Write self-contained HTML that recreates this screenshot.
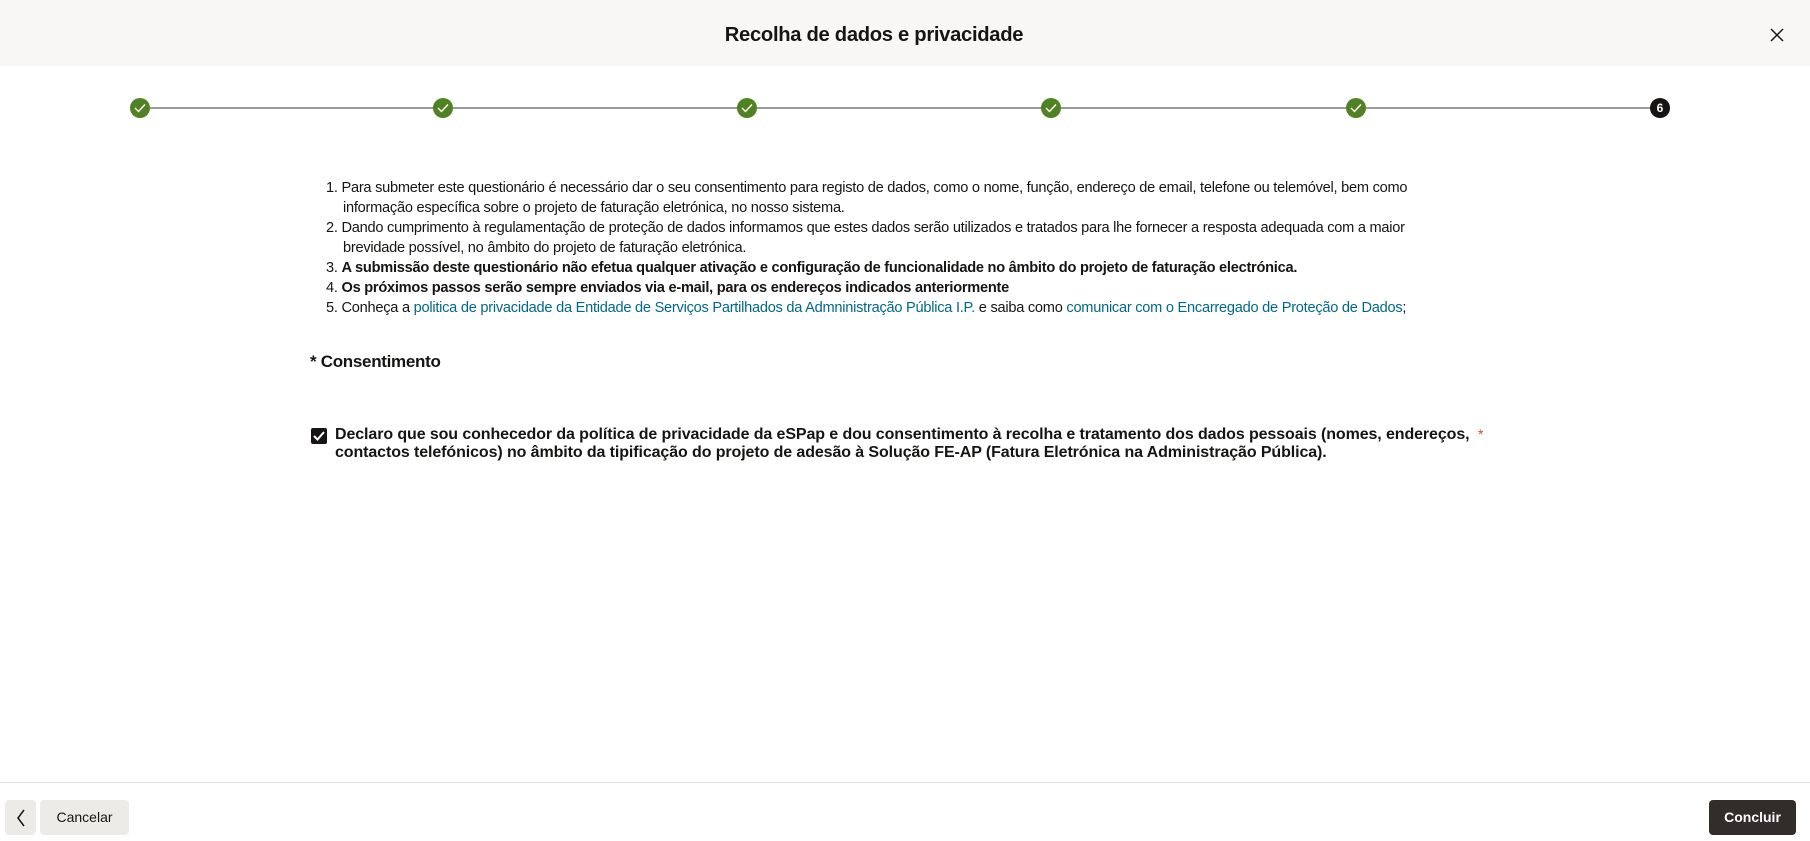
<!DOCTYPE html>
<html><head><meta charset="utf-8">
<style>
*{box-sizing:border-box;margin:0;padding:0}
body{width:1810px;height:841px;background:#fff;font-family:"Liberation Sans",sans-serif;color:#161513;position:relative;overflow:hidden}
.hdr{position:absolute;left:0;top:0;width:1810px;height:66px;background:#f8f7f5}
.hdr h1{position:absolute;left:0;right:62px;top:24px;text-align:center;font-size:20.2px;font-weight:bold;letter-spacing:-0.3px}
.x{position:absolute;left:1770px;top:28px}
.line{position:absolute;left:140px;width:1520px;top:107px;height:2px;background:#9a9a9a}
.c{position:absolute;top:98px;width:20px;height:20px;border-radius:50%;background:#508223;margin-left:-10px}
.c svg{position:absolute;left:4px;top:5px}
.c6{background:#161513;color:#fff;font-size:12px;font-weight:bold;text-align:center;line-height:20px}
.list{position:absolute;left:326px;top:178px;font-size:14.6px;line-height:20px;white-space:nowrap;letter-spacing:-0.25px}
.list div{padding-left:17px;text-indent:-17px}
.list b{font-weight:bold}
a{color:#00688c;text-decoration:none}
.cons{position:absolute;left:310px;top:352px;font-size:17px;font-weight:bold;letter-spacing:-0.3px}
.cb{position:absolute;left:311px;top:428px;width:16px;height:16px;background:#161513;border-radius:2px}
.cb svg{position:absolute;left:2px;top:3px}
.lbl{position:absolute;left:335px;top:426px;font-size:16px;font-weight:bold;line-height:18px;white-space:nowrap;letter-spacing:-0.1px}
.req{position:absolute;left:1478px;top:426px;color:#c74634;font-size:14px}
.ft{position:absolute;left:0;top:782px;width:1810px;height:1px;background:#e4e2df}
.btn{position:absolute;top:800px;height:35px;background:#edebe8;border-radius:4px;font-size:14px;line-height:35px;text-align:center}
</style></head><body>
<div class="hdr"><h1>Recolha de dados e privacidade</h1>
<svg class="x" width="14" height="14" viewBox="0 0 14 14"><path d="M1 1L13 13M13 1L1 13" stroke="#161513" stroke-width="1.5"/></svg></div>
<div class="line"></div>
<div class="c" style="left:140px"><svg width="12" height="10" viewBox="0 0 12 10"><path d="M1 5l3.5 3.5L11 1.5" stroke="#fff" stroke-width="1.4" fill="none"/></svg></div>
<div class="c" style="left:443px"><svg width="12" height="10" viewBox="0 0 12 10"><path d="M1 5l3.5 3.5L11 1.5" stroke="#fff" stroke-width="1.4" fill="none"/></svg></div>
<div class="c" style="left:747px"><svg width="12" height="10" viewBox="0 0 12 10"><path d="M1 5l3.5 3.5L11 1.5" stroke="#fff" stroke-width="1.4" fill="none"/></svg></div>
<div class="c" style="left:1051px"><svg width="12" height="10" viewBox="0 0 12 10"><path d="M1 5l3.5 3.5L11 1.5" stroke="#fff" stroke-width="1.4" fill="none"/></svg></div>
<div class="c" style="left:1356px"><svg width="12" height="10" viewBox="0 0 12 10"><path d="M1 5l3.5 3.5L11 1.5" stroke="#fff" stroke-width="1.4" fill="none"/></svg></div>
<div class="c c6" style="left:1660px">6</div>
<div class="list">
<div>1. Para submeter este questionário é necessário dar o seu consentimento para registo de dados, como o nome, função, endereço de email, telefone ou telemóvel, bem como<br>informação específica sobre o projeto de faturação eletrónica, no nosso sistema.</div>
<div>2. Dando cumprimento à regulamentação de proteção de dados informamos que estes dados serão utilizados e tratados para lhe fornecer a resposta adequada com a maior<br>brevidade possível, no âmbito do projeto de faturação eletrónica.</div>
<div>3. <b>A submissão deste questionário não efetua qualquer ativação e configuração de funcionalidade no âmbito do projeto de faturação electrónica.</b></div>
<div>4. <b>Os próximos passos serão sempre enviados via e-mail, para os endereços indicados anteriormente</b></div>
<div>5. Conheça a <a>politica de privacidade da Entidade de Serviços Partilhados da Admninistração Pública I.P.</a> e saiba como <a>comunicar com o Encarregado de Proteção de Dados</a>;</div>
</div>
<div class="cons">* Consentimento</div>
<div class="cb"><svg width="12" height="10" viewBox="0 0 12 10"><path d="M1 5l3.5 3.5L11 1" stroke="#fff" stroke-width="2" fill="none"/></svg></div>
<div class="lbl">Declaro que sou conhecedor da política de privacidade da eSPap e dou consentimento à recolha e tratamento dos dados pessoais (nomes, endereços,<br>contactos telefónicos) no âmbito da tipificação do projeto de adesão à Solução FE-AP (Fatura Eletrónica na Administração Pública).</div>
<div class="req">*</div>
<div class="ft"></div>
<div class="btn" style="left:5px;width:31px"><svg width="10" height="18" viewBox="0 0 10 18" style="margin-top:9px"><path d="M8 1L2 9l6 8" stroke="#161513" stroke-width="1.5" fill="none"/></svg></div>
<div class="btn" style="left:40px;width:89px">Cancelar</div>
<div class="btn" style="left:1709px;width:87px;background:#312d2a;color:#fff;font-weight:bold">Concluir</div>
</body></html>
